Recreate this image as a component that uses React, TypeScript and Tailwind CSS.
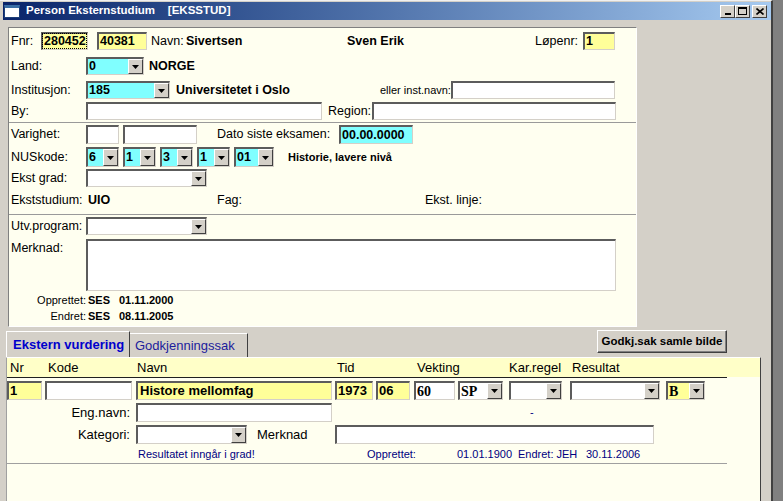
import React from "react"

const sunken =
  "border-t-2 border-l-2 border-b border-r border-t-[#5c5c5c] border-l-[#5c5c5c] border-b-[#d4d0c8] border-r-[#d4d0c8]"

const raised =
  "border-t border-l border-b border-r border-t-white border-l-white border-b-[#404040] border-r-[#404040]"

type BoxProps = {
  w: string
  h?: string
  bg?: string
  className?: string
  children?: React.ReactNode
}

function Box({ w, h = "h-[18px]", bg = "bg-white", className = "", children }: BoxProps) {
  return (
    <div className={`${w} ${h} ${bg} ${sunken} shrink-0 flex items-center pl-[1px] overflow-hidden ${className}`}>
      {children}
    </div>
  )
}

function Arrow() {
  return (
    <div className={`w-[15px] h-full shrink-0 bg-[#d4d0c8] ${raised} flex items-center justify-center`}>
      <svg width="7" height="4" viewBox="0 0 7 4">
        <path d="M0 0h7L3.5 4z" fill="#000" />
      </svg>
    </div>
  )
}

function Sel({ w, h, bg, className, children }: BoxProps) {
  return (
    <Box w={w} h={h} bg={bg} className={className}>
      <span className="flex-1 truncate">{children}</span>
      <Arrow />
    </Box>
  )
}

function Label({ children }: { children: React.ReactNode }) {
  return <span className="w-[75px] shrink-0">{children}</span>
}

const yellow = "bg-[#ffff99]"
const cyan = "bg-[#80ffff]"

export default function App() {
  return (
    <div className="w-[783px] h-[501px] bg-[#808080] flex overflow-hidden font-['Liberation_Sans',Arial,sans-serif] text-black">
      <div className="w-[773px] h-full bg-[#d4d0c8] flex flex-col pt-[1px] pl-[3px] border-t border-t-[#f0f0f0] border-r-2 border-r-[#404040]">
        {/* Title bar */}
        <div className="h-[18px] w-[768px] bg-linear-to-r from-[#0a246a] to-[#a6caf0] flex items-center">
          <div className="ml-[1px] w-[16px] h-[13px] bg-white border-t-[3px] border-t-[#3a6ea5] border border-[#1c3f78]" />
          <span className="ml-[6px] text-white font-bold text-[11.5px] whitespace-pre">
            Person Eksternstudium    [EKSSTUD]
          </span>
          <div className="ml-auto mr-[4px] flex items-center">
            <div className={`w-[15px] h-[13px] bg-[#d4d0c8] ${raised} flex items-end justify-center pb-[2px]`}>
              <div className="w-[6px] h-[2px] bg-black" />
            </div>
            <div className={`w-[15px] h-[13px] bg-[#d4d0c8] ${raised} flex items-center justify-center`}>
              <div className="w-[9px] h-[8px] border border-black border-t-2" />
            </div>
            <div className={`ml-[2px] w-[15px] h-[13px] bg-[#d4d0c8] ${raised} flex items-center justify-center`}>
              <svg width="8" height="7" viewBox="0 0 8 7">
                <path d="M0.5 0.5L7.5 6.5M7.5 0.5L0.5 6.5" stroke="#000" strokeWidth="1.6" />
              </svg>
            </div>
          </div>
        </div>

        {/* Upper form */}
        <div className="ml-[5px] mt-[7px] w-[629px] h-[300px] shrink-0 bg-[#fffff0] border border-t-[#808080] border-l-[#808080] border-b-white border-r-white flex flex-col text-[12.5px]">
          <div className="mt-[4px] h-[18px] flex items-center pl-[2px]">
            <span className="w-[30px] shrink-0">Fnr:</span>
            <Box w="w-[47px]" bg={yellow} className="outline-1 outline-dotted outline-black -outline-offset-2">
              <b>280452</b>
            </Box>
            <Box w="w-[50px]" bg={yellow} className="ml-[9px]">
              <b>40381</b>
            </Box>
            <span className="ml-[4px] w-[35px] shrink-0">Navn:</span>
            <span className="w-[161px] shrink-0 font-bold">Sivertsen</span>
            <span className="w-[188px] shrink-0 font-bold">Sven Erik</span>
            <span className="w-[48px] shrink-0">Løpenr:</span>
            <Box w="w-[32px]" bg={yellow}>
              <b>1</b>
            </Box>
          </div>

          <div className="mt-[7px] h-[18px] flex items-center pl-[2px]">
            <Label>Land:</Label>
            <Sel w="w-[58px]" bg={cyan}>
              <b>0</b>
            </Sel>
            <span className="ml-[5px] font-bold">NORGE</span>
          </div>

          <div className="mt-[6px] h-[18px] flex items-center pl-[2px]">
            <Label>Institusjon:</Label>
            <Sel w="w-[84px]" bg={cyan}>
              <b>185</b>
            </Sel>
            <span className="ml-[6px] w-[204px] shrink-0 font-bold">Universitetet i Oslo</span>
            <span className="w-[71px] shrink-0 text-[11px]">eller inst.navn:</span>
            <Box w="w-[164px]" />
          </div>

          <div className="mt-[3px] h-[18px] flex items-center pl-[2px]">
            <Label>By:</Label>
            <Box w="w-[236px]" />
            <span className="ml-[6px] w-[44px] shrink-0">Region:</span>
            <Box w="w-[244px]" />
          </div>

          <div className="mt-[2px] h-px bg-[#9a9a9a]" />

          <div className="mt-[2px] h-[19px] flex items-center pl-[2px]">
            <Label>Varighet:</Label>
            <Box w="w-[33px]" h="h-[19px]" />
            <Box w="w-[74px]" h="h-[19px]" className="ml-[4px]" />
            <span className="ml-[20px] w-[122px] shrink-0">Dato siste eksamen:</span>
            <Box w="w-[74px]" h="h-[19px]" bg={cyan}>
              <b>00.00.0000</b>
            </Box>
          </div>

          <div className="mt-[3px] h-[20px] flex items-center pl-[2px]">
            <Label>NUSkode:</Label>
            <Sel w="w-[33px]" h="h-[20px]" bg={cyan}>
              <b>6</b>
            </Sel>
            <Sel w="w-[33px]" h="h-[20px]" bg={cyan} className="ml-[4px]">
              <b>1</b>
            </Sel>
            <Sel w="w-[33px]" h="h-[20px]" bg={cyan} className="ml-[4px]">
              <b>3</b>
            </Sel>
            <Sel w="w-[33px]" h="h-[20px]" bg={cyan} className="ml-[4px]">
              <b>1</b>
            </Sel>
            <Sel w="w-[40px]" h="h-[20px]" bg={cyan} className="ml-[4px]">
              <b>01</b>
            </Sel>
            <span className="ml-[14px] font-bold text-[11px]">Historie, lavere nivå</span>
          </div>

          <div className="mt-[2px] h-[18px] flex items-center pl-[2px]">
            <Label>Ekst grad:</Label>
            <Sel w="w-[121px]" />
          </div>

          <div className="mt-[4px] h-[18px] flex items-center pl-[2px]">
            <span className="w-[77px] shrink-0">Ekststudium:</span>
            <span className="w-[129px] shrink-0 font-bold">UIO</span>
            <span className="w-[208px] shrink-0">Fag:</span>
            <span>Ekst. linje:</span>
          </div>

          <div className="mt-[5px] h-px bg-[#9a9a9a]" />

          <div className="mt-[2px] h-[18px] flex items-center pl-[2px]">
            <Label>Utv.program:</Label>
            <Sel w="w-[121px]" />
          </div>

          <div className="mt-[4px] flex items-start pl-[2px]">
            <Label>Merknad:</Label>
            <Box w="w-[530px]" h="h-[52px]" />
          </div>

          <div className="mt-[2px] h-[14px] flex items-center text-[11px]">
            <span className="w-[77px] shrink-0 text-right">Opprettet:</span>
            <span className="ml-[2px] w-[31px] shrink-0 font-bold">SES</span>
            <span className="font-bold">01.11.2000</span>
          </div>
          <div className="mt-[2px] h-[14px] flex items-center text-[11px]">
            <span className="w-[77px] shrink-0 text-right">Endret:</span>
            <span className="ml-[2px] w-[31px] shrink-0 font-bold">SES</span>
            <span className="font-bold">08.11.2005</span>
          </div>
        </div>

        {/* Tabs */}
        <div className="mt-[3px] h-[27px] shrink-0 flex items-start">
          <div className="ml-[3px] mt-[1px] h-[26px] w-[124px] shrink-0 bg-[#d4d0c8] border-t border-l border-r border-t-white border-l-white border-r-[#404040] flex items-center pl-[6px] font-bold text-[13px] text-[#0000cc]">
            Ekstern vurdering
          </div>
          <div className="mt-[3px] h-[24px] w-[118px] shrink-0 bg-[#d4d0c8] border-t border-r border-t-white border-r-[#404040] flex items-center pl-[5px] text-[13px] text-[#1c1c9c]">
            Godkjenningssak
          </div>
          <div className={`ml-[349px] h-[23px] w-[130px] shrink-0 bg-[#d4d0c8] ${raised} shadow-[inset_-1px_-1px_0_#808080] flex items-center justify-center font-bold text-[11.5px]`}>
            Godkj.sak samle bilde
          </div>
        </div>

        {/* Lower tab page */}
        <div className="ml-[3px] w-[755px] flex-1 bg-[#fffff0] border-t border-t-white border-l border-l-[#a0a0a0] border-r border-r-[#404040] flex flex-col text-[13px]">
          <div className="h-[19px] bg-[#ffffc8] flex items-center pl-[3px]">
            <span className="w-[38px] shrink-0">Nr</span>
            <span className="w-[89px] shrink-0">Kode</span>
            <span className="w-[200px] shrink-0">Navn</span>
            <span className="w-[80px] shrink-0">Tid</span>
            <span className="w-[92px] shrink-0">Vekting</span>
            <span className="w-[63px] shrink-0">Kar.regel</span>
            <span>Resultat</span>
          </div>
          <div className="h-px w-[720px] bg-[#202020]" />

          <div className="mt-[3px] h-[19px] flex items-center">
            <Box w="w-[35px]" h="h-[19px]" bg={yellow}>
              <b>1</b>
            </Box>
            <Box w="w-[87px]" h="h-[19px]" className="ml-[3px]" />
            <Box w="w-[196px]" h="h-[19px]" bg={yellow} className="ml-[4px]">
              <b className="pl-[1px]">Histore mellomfag</b>
            </Box>
            <Box w="w-[38px]" h="h-[19px]" bg={yellow} className="ml-[3px]">
              <b>1973</b>
            </Box>
            <Box w="w-[34px]" h="h-[19px]" bg={yellow} className="ml-[3px]">
              <b>06</b>
            </Box>
            <Box w="w-[41px]" h="h-[19px]" className="ml-[4px]">
              <b className="font-['Liberation_Serif',serif] text-[14px]">60</b>
            </Box>
            <Sel w="w-[45px]" h="h-[19px]" className="ml-[3px]">
              <b className="font-['Liberation_Serif',serif] text-[14px]">SP</b>
            </Sel>
            <Sel w="w-[53px]" h="h-[19px]" className="ml-[6px]" />
            <Sel w="w-[90px]" h="h-[19px]" className="ml-[8px]" />
            <Sel w="w-[39px]" h="h-[19px]" bg={yellow} className="ml-[6px]">
              <b className="font-['Liberation_Serif',serif] text-[14px]">B</b>
            </Sel>
          </div>

          <div className="mt-[3px] h-[19px] flex items-center">
            <span className="w-[123px] shrink-0 text-right">Eng.navn:</span>
            <Box w="w-[196px]" h="h-[19px]" className="ml-[6px]" />
            <span className="ml-[198px] text-[11px] text-[#000080]">-</span>
          </div>

          <div className="mt-[3px] h-[19px] flex items-center">
            <span className="w-[123px] shrink-0 text-right">Kategori:</span>
            <Sel w="w-[111px]" h="h-[19px]" className="ml-[6px]" />
            <span className="ml-[10px] w-[78px] shrink-0">Merknad</span>
            <Box w="w-[319px]" h="h-[19px]" />
          </div>

          <div className="mt-[4px] h-[12px] flex items-center text-[11px] text-[#000080]">
            <span className="ml-[131px] w-[229px] shrink-0">Resultatet inngår i grad!</span>
            <span className="w-[90px] shrink-0">Opprettet:</span>
            <span className="w-[61px] shrink-0">01.01.1900</span>
            <span className="w-[68px] shrink-0">Endret: JEH</span>
            <span>30.11.2006</span>
          </div>

          <div className="mt-[3px] h-px w-[720px] bg-[#a0a0a0]" />
        </div>
      </div>
    </div>
  )
}
